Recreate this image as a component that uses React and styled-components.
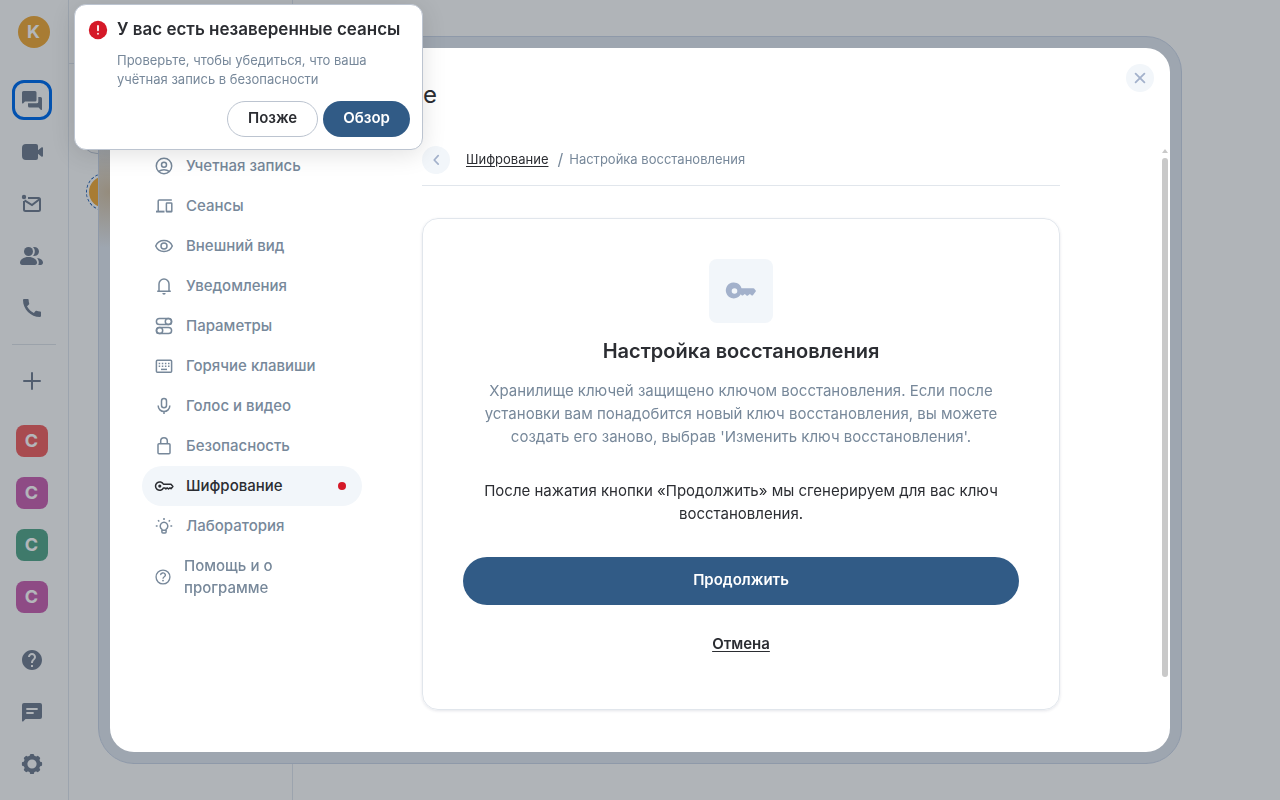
import React from 'react';
import styled, { createGlobalStyle, css } from 'styled-components';
import { MdCall, MdHelp } from 'react-icons/md';

const colors = {
  text: '#2b2d32',
  muted: '#77889a',
  faint: '#a3b1cb',
  soft: '#f2f6fa',
  line: '#e1e6ec',
  primary: '#315b86',
  red: '#d51928',
  rail: '#748294',
};

const GlobalStyle = createGlobalStyle`
  * {
    box-sizing: border-box;
  }
  body {
    margin: 0;
    overflow: hidden;
    font-family: Inter, sans-serif;
    font-size: 15px;
    line-height: 22px;
    color: ${colors.text};
  }
  button {
    font: inherit;
    color: inherit;
    border: none;
    background: none;
    padding: 0;
    cursor: pointer;
  }
  a {
    color: inherit;
  }
  h1, h2, p, ul {
    margin: 0;
    padding: 0;
  }
  ul {
    list-style: none;
  }
  svg {
    display: block;
    flex-shrink: 0;
  }
`;

/* ---------- icons ---------- */

const Svg = ({ size = 24, box = 24, children }) => (
  <svg width={size} height={size} viewBox={`0 0 ${box} ${box}`} fill="none" stroke="currentColor" aria-hidden="true">
    {children}
  </svg>
);

const TabSvg = ({ size = 20, children }) => (
  <Svg size={size} box={20}>
    <g strokeWidth="1.5">{children}</g>
  </Svg>
);

const ChatIcon = () => (
  <Svg>
    <g fill="currentColor" stroke="none">
      <path d="M3.500 3h11.500a1.500 1.500 0 0 1 1.500 1.500v7.500a1.500 1.500 0 0 1-1.500 1.500H5l-1.700 1.700A.76.76 0 0 1 2 14.700V4.500A1.500 1.500 0 0 1 3.500 3z" />
      <path d="M18.300 9h2.200A1.500 1.500 0 0 1 22 10.500v10.700a.76.76 0 0 1-1.300.5L18.600 19.500H9.500A1.500 1.500 0 0 1 8 18v-2.700h8.800a1.500 1.500 0 0 0 1.500-1.500z" />
    </g>
  </Svg>
);

const VideoIcon = () => (
  <Svg>
    <path
      fill="currentColor"
      stroke="none"
      d="M6 4h10a2 2 0 0 1 2 2v4.3l3.35-2.9a1 1 0 0 1 1.65.77v7.66a1 1 0 0 1-1.65.77L18 13.7V18a2 2 0 0 1-2 2H6a4 4 0 0 1-4-4V8a4 4 0 0 1 4-4z"
    />
  </Svg>
);

const MailIcon = () => (
  <Svg>
    <circle cx="4" cy="5" r="2.2" fill="currentColor" stroke="none" />
    <path strokeWidth="2" d="M8 6h10.5A1.5 1.5 0 0 1 20 7.500v10a1.500 1.500 0 0 1-1.500 1.500h-13A1.500 1.500 0 0 1 4 17.500V9" />
    <path strokeWidth="2" d="M4.500 8.300 12 13l7.500-5.700" />
  </Svg>
);

const GroupIcon = () => (
  <Svg>
    <g fill="currentColor" stroke="none">
      <circle cx="8.500" cy="7.500" r="4.500" />
      <path d="M0 18.500C0 15.500 3.500 13 8.500 13s8.500 2.500 8.500 5.500c0 1.500-.8 2.500-2.200 2.500H2.200C.8 21 0 20 0 18.500z" />
      <path d="M13 3.100c3.600-.5 6 1.600 6 4.400s-2.400 4.900-6 4.400c1.100-1.100 1.800-2.600 1.800-4.400S14.100 4.200 13 3.100z" />
      <path d="M17 14c3.700.4 6 2.200 6 4.500 0 1.600-.9 2.500-2.200 2.500h-2.500c.3-.7.500-1.500.5-2.400 0-1.700-.6-3.300-1.800-4.600z" />
    </g>
  </Svg>
);

const PlusIcon = () => (
  <Svg>
    <path strokeWidth="2" strokeLinecap="round" d="M12 4v16M4 12h16" />
  </Svg>
);

const MessageIcon = () => (
  <Svg>
    <path fill="currentColor" stroke="none" d="M4 3h16a2 2 0 0 1 2 2v12a2 2 0 0 1-2 2H5.500L3.400 21.300A.8.8 0 0 1 2 20.700V5a2 2 0 0 1 2-2z" />
    <path stroke="#fbfcfd" strokeWidth="1.800" strokeLinecap="round" d="M7 9h10M7 13h6" />
  </Svg>
);

const GearIcon = () => (
  <Svg>
    <circle cx="12" cy="12" r="6.500" strokeWidth="3.800" />
    {[0, 45, 90, 135, 180, 225, 270, 315].map((angle) => (
      <path key={angle} d="M9.400 5l.6-2.400a1 1 0 0 1 1-.7h2a1 1 0 0 1 1 .7l.6 2.400z" fill="currentColor" stroke="none" transform={`rotate(${angle} 12 12)`} />
    ))}
  </Svg>
);

const AccountIcon = () => (
  <TabSvg>
    <circle cx="10" cy="10" r="7.700" />
    <circle cx="10" cy="8.700" r="2.500" />
    <path d="M4.800 15.400c1.500-1.200 3.200-1.700 5.200-1.700s3.700.5 5.200 1.700" />
  </TabSvg>
);

const DevicesIcon = () => (
  <TabSvg>
    <path d="M17.800 4H5.200a1 1 0 0 0-1 1v10" />
    <path strokeWidth="1.900" d="M2 15.600h8.500" />
    <rect x="12.400" y="7" width="5.400" height="8.800" rx=".6" />
    <path d="M12.400 15.400h5.400" />
  </TabSvg>
);

const EyeIcon = () => (
  <TabSvg>
    <path d="M1.700 10C3.200 6.500 6.300 4.500 10 4.500s6.800 2 8.300 5.500c-1.500 3.500-4.600 5.500-8.300 5.500S3.200 13.500 1.700 10z" />
    <circle cx="10" cy="10" r="3" />
  </TabSvg>
);

const BellIcon = () => (
  <TabSvg>
    <path strokeLinejoin="round" d="M3.200 15.200h13.600M5 15V8a5 5 0 0 1 10 0v7" />
    <path fill="currentColor" stroke="none" d="M8.300 17h3.400a1.700 1.700 0 0 1-3.400 0z" />
  </TabSvg>
);

const TogglesIcon = () => (
  <TabSvg>
    <rect x="2.400" y="2.400" width="15.200" height="6.200" rx="3.100" />
    <circle cx="14.400" cy="5.500" r="3.100" />
    <rect x="2.400" y="11.400" width="15.200" height="6.200" rx="3.100" />
    <circle cx="5.600" cy="14.500" r="3.100" />
  </TabSvg>
);

const KeyboardIcon = () => (
  <TabSvg>
    <rect x="2.400" y="4.200" width="15.200" height="12" rx="1" />
    <path strokeDasharray="1.500 1.600" d="M4.700 7.500h11M4.700 10.300h11" />
    <path d="M7 13.400h6" />
  </TabSvg>
);

const MicIcon = () => (
  <TabSvg>
    <rect x="7.500" y="2.400" width="5" height="9.400" rx="2.500" />
    <path d="M4.200 9.500v.3a5.800 5.800 0 0 0 11.600 0v-.3M10 15.500V18" />
  </TabSvg>
);

const LockIcon = () => (
  <TabSvg>
    <rect x="4" y="7.700" width="12" height="10" rx="1" />
    <path d="M6.700 7.500V5a3.300 3.300 0 0 1 6.600 0v2.500" />
  </TabSvg>
);

const KeyIcon = () => (
  <TabSvg>
    <path strokeLinejoin="round" d="M9.500 8.300A4.200 4.200 0 1 0 9.500 11.900h1.200l1.200 1 1.300-1 1.300 1.100 1.400-1.100 1.100.8 1.900-2.200-1.900-2.200z" />
    <circle cx="5.800" cy="10.100" r="1.600" fill="currentColor" stroke="none" />
  </TabSvg>
);

const SolidKeyIcon = () => (
  <Svg size={32} box={32}>
    <path
      fill="currentColor"
      fillRule="evenodd"
      stroke="none"
      d="M16.500 13.200H28.200a1.200 1.200 0 0 1 .9.400l1.600 1.800a1 1 0 0 1 0 1.200l-2.600 3.400a1.200 1.200 0 0 1-1.700.2l-1.500-1.200-1.900 1.500a1.200 1.200 0 0 1-1.500 0l-1.700-1.400-1.600 1.200a1.200 1.200 0 0 1-1.600-.1l-.8-.9A8 8 0 1 1 16.500 13.200zM9.500 13.200a2.800 2.800 0 1 0 0 5.600a2.800 2.800 0 1 0 0-5.600z"
    />
  </Svg>
);

const BulbIcon = () => (
  <TabSvg>
    <path d="M7.900 13.300A3.800 3.800 0 1 1 12.100 13.300V16a1 1 0 0 1-1 1H8.900a1 1 0 0 1-1-1z" />
    <path d="M8 14.200h4M10 2v2M4 4.200l1.300 1.300M16 4.200l-1.300 1.300M1.800 10h1.800M16.400 10h1.800" />
  </TabSvg>
);

const HelpIcon = () => (
  <TabSvg size={18}>
    <circle cx="10" cy="10" r="7.700" />
    <path d="M7.400 8A2.600 2.300 0 1 1 11.400 9.700C10.400 10.400 10 10.800 10 12" />
    <circle cx="10" cy="14" r="1" fill="currentColor" stroke="none" />
  </TabSvg>
);

const CloseIcon = () => (
  <Svg size={16} box={16}>
    <path strokeWidth="1.800" strokeLinecap="round" d="M3.600 3.600l8.800 8.800M12.400 3.600l-8.800 8.800" />
  </Svg>
);

const BackIcon = () => (
  <Svg size={16} box={16}>
    <path strokeWidth="1.700" strokeLinecap="round" strokeLinejoin="round" d="M10.200 3.700L6.200 8l4 4.200" />
  </Svg>
);

const ErrorIcon = () => (
  <Svg size={20} box={20}>
    <circle cx="10" cy="10" r="9.200" fill={colors.red} stroke="none" />
    <path stroke="#fff" strokeWidth="1.800" strokeLinecap="round" d="M10 6v4.300M10 13.700v.1" />
  </Svg>
);

/* ---------- application behind the dialog ---------- */

const Shell = styled.div`
  display: flex;
  height: 100vh;
  background: #fbfcfd;
`;

const Rail = styled.nav`
  display: flex;
  flex-direction: column;
  align-items: center;
  gap: 12px;
  width: 69px;
  padding: 12px 5px 16px 0;
  border-right: 1px solid #dfe6ee;
  color: ${colors.rail};
`;

const RailButton = styled.button`
  display: flex;
  align-items: center;
  justify-content: center;
  flex-shrink: 0;
  width: 40px;
  height: 40px;
  border-radius: 12px;
  ${({ $active }) => $active && css`
    border: 3px solid #0470f0;
  `}
`;

const Avatar = styled.span`
  display: flex;
  align-items: center;
  justify-content: center;
  width: 32px;
  height: 32px;
  border-radius: ${({ $round }) => ($round ? '50%' : '8px')};
  background: ${({ $color }) => $color};
  color: #fff;
  font-size: 18px;
  font-weight: 700;
`;

const ProfileButton = styled(RailButton)`
  margin: 0 0 16px 4px;
`;

const RailDivider = styled.hr`
  width: 44px;
  margin: 4px 0 4px 4px;
  border: none;
  border-top: 1px solid #dde2e8;
`;

const Spaces = styled.div`
  display: flex;
  flex-direction: column;
  gap: 12px;
  margin-top: 8px;
`;

const RailFooter = styled.div`
  display: flex;
  flex-direction: column;
  gap: 12px;
  margin-top: auto;
`;

const RoomList = styled.div`
  width: 224px;
  border-right: 1px solid #dfe6ee;
`;

const RoomListHeader = styled.div`
  height: 64px;
  border-bottom: 1px solid #dfe6ee;
`;

const RoomListBody = styled.div`
  display: flex;
  flex-direction: column;
  align-items: flex-start;
  gap: 19px;
  padding: 58px 10px 0 8px;
`;

const FilterButton = styled.button`
  width: 64px;
  height: 32px;
  margin-left: 4px;
  border: 1px solid #c3ccd8;
  border-radius: 16px;
`;

const RoomButton = styled.button`
  margin-left: 9px;
  padding: 2px;
  border: 1px dashed #2262b5;
  border-radius: 50%;
`;

/* ---------- dialog ---------- */

const Overlay = styled.div`
  position: fixed;
  inset: 0;
  display: flex;
  padding: 36px 98px;
  background: rgba(3, 12, 27, 0.3);
`;

/* frosted frame, with the room avatar glowing through on the left */
const DialogFrame = styled.div`
  display: flex;
  flex: 1;
  min-width: 0;
  padding: 11px;
  border: 1px solid #8e99a9;
  border-radius: 36px;
  background: radial-gradient(circle at 10px 155px, #958c7d, rgba(149, 140, 125, 0) 56px) #9ea6b0;
`;

const Dialog = styled.section`
  display: flex;
  flex-direction: column;
  flex: 1;
  min-width: 0;
  border-radius: 24px;
  background: #fff;
`;

const DialogHeader = styled.header`
  display: flex;
  justify-content: space-between;
  align-items: flex-start;
  height: 98px;
  padding: 16px 16px 0 34px;
`;

const DialogTitle = styled.h1`
  padding-top: 15px;
  font-size: 24px;
  font-weight: 400;
  line-height: 32px;
`;

const CircleButton = styled.button`
  display: flex;
  align-items: center;
  justify-content: center;
  flex-shrink: 0;
  width: 28px;
  height: 28px;
  border-radius: 50%;
  background: ${colors.soft};
  color: ${colors.faint};
`;

const DialogBody = styled.div`
  display: flex;
  flex: 1;
  min-height: 0;
  padding: 0 2px 0 32px;
`;

const Tabs = styled.ul`
  flex-shrink: 0;
  width: 220px;
`;

const Tab = styled.button`
  display: flex;
  align-items: center;
  gap: 12px;
  width: 100%;
  min-height: 40px;
  padding: 9px 16px 9px 12px;
  border-radius: 20px;
  background: ${({ $active }) => ($active ? colors.soft : 'transparent')};
  color: ${({ $active }) => ($active ? colors.text : colors.muted)};
  font-weight: 500;
  text-align: left;
`;

const TabLabel = styled.span`
  flex: 1;
  max-width: 140px;
`;

const Dot = styled.span`
  width: 8px;
  height: 8px;
  border-radius: 50%;
  background: ${colors.red};
`;

const Content = styled.main`
  flex: 1;
  min-width: 0;
  margin: 0 102px 0 60px;
`;

const Breadcrumb = styled.nav`
  display: flex;
  align-items: center;
  height: 40px;
  padding-bottom: 12px;
  border-bottom: 1px solid ${colors.line};
  font-size: 13px;
  line-height: 23px;
  color: ${colors.muted};
`;

const BreadcrumbLink = styled.a`
  margin-left: 16px;
  color: ${colors.text};
  text-underline-offset: 2px;
`;

const Slash = styled.span`
  margin: 0 6px 0 9px;
  font-size: 16px;
`;

const Card = styled.section`
  display: flex;
  flex-direction: column;
  align-items: center;
  margin-top: 32px;
  padding: 40px;
  border: 1px solid ${colors.line};
  border-radius: 16px;
  box-shadow: 0 1px 3px rgba(30, 45, 80, 0.12);
  text-align: center;
`;

const KeyTile = styled.div`
  display: flex;
  align-items: center;
  justify-content: center;
  width: 64px;
  height: 64px;
  border-radius: 8px;
  background: ${colors.soft};
  color: ${colors.faint};
`;

const CardTitle = styled.h2`
  margin: 14px 0;
  font-size: 20px;
  font-weight: 600;
  line-height: 28px;
`;

const CardText = styled.p`
  max-width: 520px;
  line-height: 23px;
  color: ${({ $muted }) => ($muted ? colors.muted : colors.text)};
  & + & {
    margin-top: 31px;
  }
`;

const Actions = styled.div`
  display: flex;
  flex-direction: column;
  gap: 16px;
  width: 100%;
  margin-top: 32px;
`;

const Button = styled.button`
  height: ${({ $small }) => ($small ? 36 : 48)}px;
  padding: 0 20px 2px;
  border-radius: 24px;
  font-weight: 600;
  ${({ $kind }) => $kind === 'primary' && css`
    background: ${colors.primary};
    color: #fff;
  `}
  ${({ $kind }) => $kind === 'outline' && css`
    border: 1px solid #bcc4d0;
  `}
  ${({ $kind }) => $kind === 'link' && css`
    text-decoration: underline;
    text-underline-offset: 2px;
  `}
`;

const Scrollbar = styled.div`
  display: flex;
  flex-direction: column;
  gap: 5px;
  width: 6px;
  padding: 3px 0 75px;
`;

const ScrollArrow = styled.span`
  border: 3px solid transparent;
  border-top: none;
  border-bottom: 4px solid #c9c9c9;
`;

const ScrollThumb = styled.span`
  flex: 1;
  border-radius: 3px;
  background: #c9c9c9;
`;

/* ---------- toast ---------- */

const Toast = styled.aside`
  position: fixed;
  top: 4px;
  left: 74px;
  display: grid;
  grid-template-columns: 20px 1fr;
  column-gap: 9px;
  width: 349px;
  padding: 13px 12px 12px 13px;
  border: 1px solid #bcc4d0;
  border-radius: 12px;
  background: #fff;
  box-shadow: 0 4px 24px rgba(0, 0, 0, 0.12);
`;

const ToastTitle = styled.h2`
  margin-bottom: 11px;
  font-size: 17px;
  font-weight: 600;
  line-height: 22px;
`;

const ToastIcon = styled.span`
  padding-top: 2px;
`;

const ToastText = styled.p`
  grid-column: 2;
  padding-right: 32px;
  font-size: 13px;
  line-height: 19px;
  color: ${colors.muted};
`;

const ToastActions = styled.div`
  grid-column: 1 / 3;
  display: flex;
  justify-content: flex-end;
  gap: 5px;
  margin-top: 12px;
`;

const spaces = [
  { id: 1, color: '#ef6666' },
  { id: 2, color: '#cb66b4' },
  { id: 3, color: '#5aaa8f' },
  { id: 4, color: '#cb66b4' },
];

const tabs = [
  { label: 'Учетная запись', icon: <AccountIcon /> },
  { label: 'Сеансы', icon: <DevicesIcon /> },
  { label: 'Внешний вид', icon: <EyeIcon /> },
  { label: 'Уведомления', icon: <BellIcon /> },
  { label: 'Параметры', icon: <TogglesIcon /> },
  { label: 'Горячие клавиши', icon: <KeyboardIcon /> },
  { label: 'Голос и видео', icon: <MicIcon /> },
  { label: 'Безопасность', icon: <LockIcon /> },
  { label: 'Шифрование', icon: <KeyIcon />, active: true },
  { label: 'Лаборатория', icon: <BulbIcon /> },
  { label: 'Помощь и о программе', icon: <HelpIcon /> },
];

const AppShell = () => (
  <Shell>
    <Rail>
      <ProfileButton><Avatar $round $color="#efad40">K</Avatar></ProfileButton>
      <RailButton $active><ChatIcon /></RailButton>
      <RailButton><VideoIcon /></RailButton>
      <RailButton><MailIcon /></RailButton>
      <RailButton><GroupIcon /></RailButton>
      <RailButton><MdCall size={24} /></RailButton>
      <RailDivider />
      <RailButton><PlusIcon /></RailButton>
      <Spaces>
        {spaces.map(({ id, color }) => (
          <RailButton key={id}><Avatar $color={color}>С</Avatar></RailButton>
        ))}
      </Spaces>
      <RailFooter>
        <RailButton><MdHelp size={24} /></RailButton>
        <RailButton><MessageIcon /></RailButton>
        <RailButton><GearIcon /></RailButton>
      </RailFooter>
    </Rail>
    <RoomList>
      <RoomListHeader />
      <RoomListBody>
        <FilterButton />
        <RoomButton><Avatar $round $color="#efad40" /></RoomButton>
      </RoomListBody>
    </RoomList>
  </Shell>
);

const EncryptionSettings = () => (
  <Content>
    <Breadcrumb>
      <CircleButton><BackIcon /></CircleButton>
      <BreadcrumbLink href="#encryption">Шифрование</BreadcrumbLink>
      <Slash>/</Slash>
      <span>Настройка восстановления</span>
    </Breadcrumb>
    <Card>
      <KeyTile><SolidKeyIcon /></KeyTile>
      <CardTitle>Настройка восстановления</CardTitle>
      <CardText $muted>
        Хранилище ключей защищено ключом восстановления. Если после установки вам понадобится
        новый ключ восстановления, вы можете создать его заново, выбрав 'Изменить ключ
        восстановления'.
      </CardText>
      <CardText>
        После нажатия кнопки «Продолжить» мы сгенерируем для вас ключ восстановления.
      </CardText>
      <Actions>
        <Button $kind="primary">Продолжить</Button>
        <Button $kind="link">Отмена</Button>
      </Actions>
    </Card>
  </Content>
);

export default function App() {
  return (
    <>
      <GlobalStyle />
      <AppShell />
      <Overlay>
        <DialogFrame>
          <Dialog role="dialog">
            <DialogHeader>
              <DialogTitle>Настройки: Шифрование</DialogTitle>
              <CircleButton><CloseIcon /></CircleButton>
            </DialogHeader>
            <DialogBody>
              <Tabs>
                {tabs.map(({ label, icon, active }) => (
                  <li key={label}>
                    <Tab $active={active}>
                      {icon}
                      <TabLabel>{label}</TabLabel>
                      {active && <Dot />}
                    </Tab>
                  </li>
                ))}
              </Tabs>
              <EncryptionSettings />
              <Scrollbar>
                <ScrollArrow />
                <ScrollThumb />
              </Scrollbar>
            </DialogBody>
          </Dialog>
        </DialogFrame>
      </Overlay>
      <Toast>
        <ToastIcon><ErrorIcon /></ToastIcon>
        <ToastTitle>У вас есть незаверенные сеансы</ToastTitle>
        <ToastText>Проверьте, чтобы убедиться, что ваша учётная запись в безопасности</ToastText>
        <ToastActions>
          <Button $small $kind="outline">Позже</Button>
          <Button $small $kind="primary">Обзор</Button>
        </ToastActions>
      </Toast>
    </>
  );
}
